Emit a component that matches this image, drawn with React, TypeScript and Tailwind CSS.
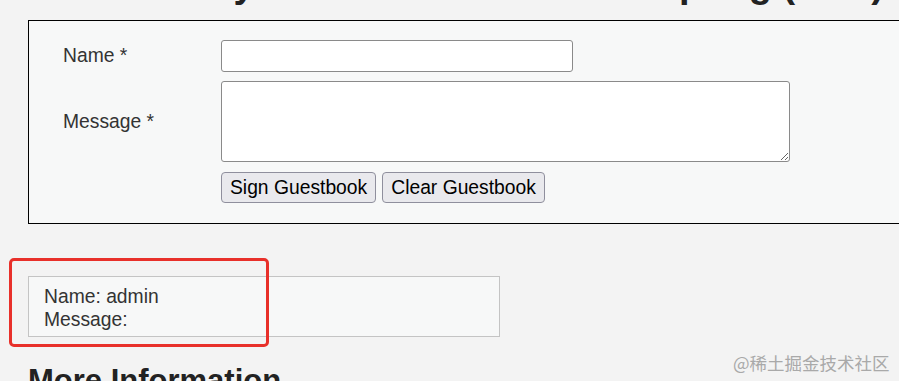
const font = { fontFamily: '"Liberation Sans", Arial, sans-serif' };

const GuestbookForm = () => {
  return (
    <div className="ml-[28px] mt-[17px] w-[900px] border-y border-l border-black bg-[#f7f8f8] pl-[34px] pt-[19px] pb-[20px]">
      <div className="flex items-center">
        <label className="w-[158px] pt-[1px] text-[19.3px] text-[#333]">Name *</label>
        <input
          type="text"
          className="h-[32px] w-[352px] rounded-[3px] border border-[#8a8a8a] bg-white px-2 outline-none"
        />
      </div>
      <div className="mt-[9px] flex items-center">
        <label className="w-[158px] pt-[2px] text-[19.3px] text-[#333]">Message *</label>
        <textarea className="h-[81px] w-[569px] resize rounded-[3px] border border-[#8a8a8a] bg-white px-2 outline-none" />
      </div>
      <div className="ml-[158px] mt-[10px] flex gap-[6px]">
        <button className="h-[31px] rounded-[4px] border border-[#8f8f9d] bg-[#e9e9ed] px-[8px] text-[19.3px] leading-none text-black">
          Sign Guestbook
        </button>
        <button className="h-[31px] rounded-[4px] border border-[#8f8f9d] bg-[#e9e9ed] px-[8px] text-[19.3px] leading-none text-black">
          Clear Guestbook
        </button>
      </div>
    </div>
  );
};

export default function App() {
  return (
    <div className="relative h-[381px] w-[899px] overflow-hidden bg-[#f3f3f3]" style={font}>
      <h1 className="-mt-[35px] ml-[28px] whitespace-nowrap text-[38px] font-bold leading-none text-[#222]">
        Vulnerability: Stored Cross Site Scripting (XSS)
      </h1>

      <GuestbookForm />

      <div className="ml-[28px] mt-[52px] w-[472px] border border-[#c4c4c4] bg-[#f7f8f8] pl-[15px] pt-[8px] pb-[5px] text-[19.3px] leading-[23px] text-[#333]">
        <div>Name: admin</div>
        <div>Message: </div>
      </div>

      <h2 className="ml-[28px] mt-[28px] text-[31px] font-bold leading-none text-[#222]">More Information</h2>

      {/* red highlight drawn over the result */}
      <div className="absolute left-[9px] top-[258px] h-[89px] w-[260px] rounded-[5px] border-[3px] border-[#e8302a]" />

      <div
        className="absolute left-[733px] top-[354px] text-[17.5px] leading-none text-[#a9a9a9]"
        style={{ fontFamily: '"Noto Sans CJK SC", sans-serif' }}
      >
        @稀土掘金技术社区
      </div>
    </div>
  );
}
